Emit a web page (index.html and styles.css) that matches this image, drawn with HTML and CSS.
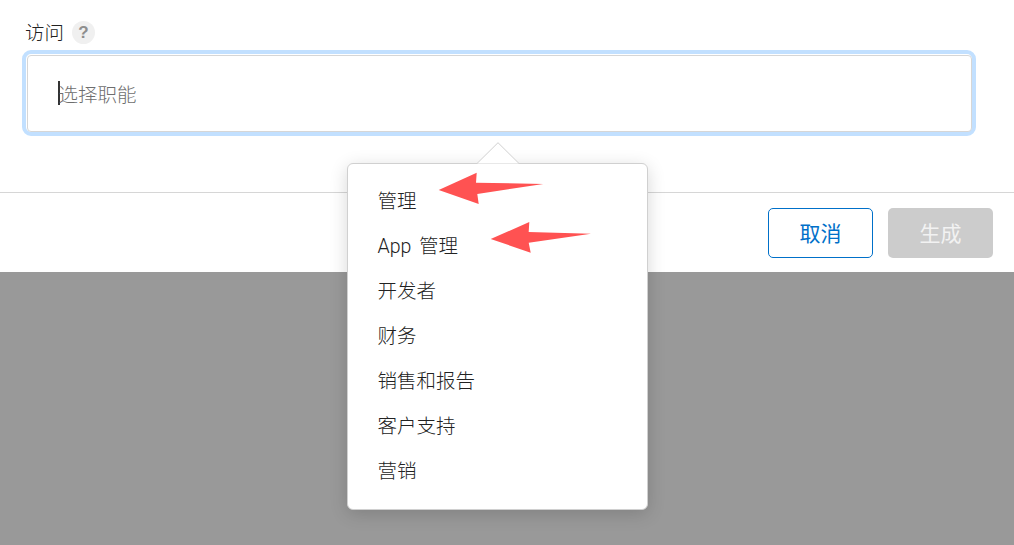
FILE: index.html
```html
<!DOCTYPE html>
<html lang="zh-CN">
<head>
    <meta charset="UTF-8">
    <meta name="viewport" content="width=device-width, initial-scale=1.0">
    <title>访问</title>
    <link rel="stylesheet" href="styles.css">
</head>
<body>
    <div class="dialog">
        <div class="form">
            <div class="label-row">
                <span class="label">访问</span>
                <span class="help">?</span>
            </div>
            <div class="input-glow">
                <div class="input">
                    <span class="caret"></span>
                    <span class="placeholder">选择职能</span>
                </div>
            </div>
        </div>
        <div class="footer">
            <button class="btn btn-cancel">取消</button>
            <button class="btn btn-create">生成</button>
        </div>
    </div>
    <div class="backdrop"></div>

    <div class="menu">
        <svg class="menu-tip" width="44" height="22" viewBox="0 0 44 22">
            <path d="M1 21.5 L22 0.7 L43 21.5" fill="#fff" stroke="#d0d0d0" stroke-width="1"/>
        </svg>
        <ul class="menu-list">
            <li>管理</li>
            <li>App 管理</li>
            <li>开发者</li>
            <li>财务</li>
            <li>销售和报告</li>
            <li>客户支持</li>
            <li>营销</li>
        </ul>
    </div>

    <svg class="arrows" width="1014" height="545" viewBox="0 0 1014 545">
        <polygon points="438.7,190 476.7,172.7 476,182.7 543.3,184 477.3,194 478.7,204" fill="#ff5252"/>
        <polygon points="490.7,239 529.3,222 528.7,232 591,233.7 528.7,242.7 530.7,252.7" fill="#ff5252"/>
    </svg>
</body>
</html>
```

FILE: styles.css
```css
body {
    margin: 0;
    height: 545px;
    overflow: hidden;
    display: flex;
    flex-direction: column;
    position: relative;
    background-color: #fff;
    font-family: Roboto, "Noto Sans CJK SC", sans-serif;
    font-size: 19.5px;
    font-weight: 300;
    color: #222;
}
.dialog {
    background-color: #fff;
}
.form {
    height: 193px;
    padding: 18px 38px 0 22px;
    box-sizing: border-box;
    border-bottom: 1px solid #d6d6d6;
}
.label-row {
    display: flex;
    align-items: center;
    gap: 8px;
    height: 28px;
    padding-left: 3px;
    margin-bottom: 4px;
}
.label {
    padding-bottom: 2px;
}
.help {
    width: 23px;
    height: 23px;
    border-radius: 50%;
    background-color: #f0f0f0;
    color: #8e8e8e;
    font-family: "Liberation Sans", sans-serif;
    font-size: 17px;
    font-weight: bold;
    line-height: 23px;
    text-align: center;
}
.input-glow {
    height: 86px;
    width: 954px;
    box-sizing: border-box;
    padding: 0.5px;
    background-color: #fff;
    border: 4px solid #c2e0ff;
    border-radius: 9px;
}
.input {
    height: 100%;
    box-sizing: border-box;
    border: 1px solid #d6d6d6;
    border-radius: 4px;
    display: flex;
    align-items: center;
    padding-left: 30px;
}
.caret {
    width: 2px;
    height: 24px;
    background-color: #333;
}
.placeholder {
    margin-left: -1px;
    color: #6e6e6e;
}
.footer {
    height: 79px;
    box-sizing: border-box;
    padding: 15px 21px 0 0;
    display: flex;
    justify-content: flex-end;
    gap: 15px;
}
.btn {
    width: 105px;
    height: 50px;
    border-radius: 5px;
    font-family: inherit;
    font-size: 21px;
    font-weight: 400;
    padding: 0 0 2px;
}
.btn-cancel {
    background-color: #fff;
    border: 1px solid #0070c9;
    color: #0070c9;
}
.btn-create {
    background-color: #ccc;
    border: 0;
    color: #f2f2f2;
}
.backdrop {
    flex: 1;
    background-color: #999;
}

/* popover over the dialog */
.menu {
    position: absolute;
    left: 347px;
    top: 163px;
    width: 301px;
    height: 347px;
    box-sizing: border-box;
    background-color: #fff;
    border: 1px solid #d0d0d0;
    border-radius: 6px;
    box-shadow: 0 4px 18px rgba(0, 0, 0, 0.16);
}
.menu-tip {
    position: absolute;
    left: 128px;
    top: -22px;
}
.menu-list {
    list-style: none;
    margin: 0;
    padding: 15px 0 0 29.5px;
    word-spacing: 3px;
}
.menu-list li {
    height: 45px;
    line-height: 45px;
}
.arrows {
    position: absolute;
    left: 0;
    top: 0;
}
```
